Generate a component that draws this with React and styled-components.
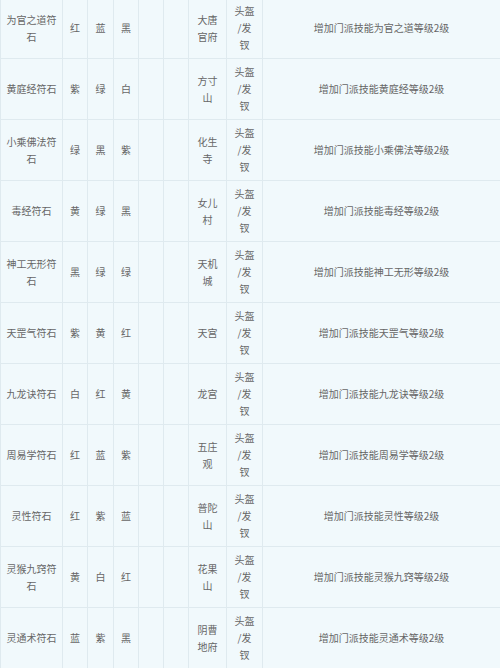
import styled, { createGlobalStyle } from "styled-components";

const GlobalStyle = createGlobalStyle`
  body {
    margin: 0;
    background: #f1f9fc;
    font-family: "Noto Sans CJK SC", "Noto Sans", sans-serif;
  }
`;

const stones = [
  ["为官之道符石", "红", "蓝", "黑", "大唐官府", "为官之道"],
  ["黄庭经符石", "紫", "绿", "白", "方寸山", "黄庭经"],
  ["小乘佛法符石", "绿", "黑", "紫", "化生寺", "小乘佛法"],
  ["毒经符石", "黄", "绿", "黑", "女儿村", "毒经"],
  ["神工无形符石", "黑", "绿", "绿", "天机城", "神工无形"],
  ["天罡气符石", "紫", "黄", "红", "天宫", "天罡气"],
  ["九龙诀符石", "白", "红", "黄", "龙宫", "九龙诀"],
  ["周易学符石", "红", "蓝", "紫", "五庄观", "周易学"],
  ["灵性符石", "红", "紫", "蓝", "普陀山", "灵性"],
  ["灵猴九窍符石", "黄", "白", "红", "花果山", "灵猴九窍"],
  ["灵通术符石", "蓝", "紫", "黑", "阴曹地府", "灵通术"],
];

const widths = [62, 25, 26, 25, 25, 25, 38, 36, 238];

export default function App() {
  return (
    <>
      <GlobalStyle />
      <Table>
        <colgroup>
          {widths.map((w, i) => (
            <col key={i} style={{ width: w }} />
          ))}
        </colgroup>
        <tbody>
          {stones.map(([name, a, b, c, school, skill]) => (
            <tr key={name}>
              <Cell $pad={5}>{name}</Cell>
              <Cell>{a}</Cell>
              <Cell>{b}</Cell>
              <Cell>{c}</Cell>
              <Cell />
              <Cell />
              <Cell $pad={4}>{school}</Cell>
              <Cell>
                头盔
                <br />
                /发
                <br />钗
              </Cell>
              <Cell>增加门派技能{skill}等级2级</Cell>
            </tr>
          ))}
        </tbody>
      </Table>
    </>
  );
}

const Table = styled.table`
  width: 500px;
  margin-top: -3px;
  table-layout: fixed;
  border-collapse: collapse;
  background: #f1f9fc;
  color: #666;
  font-size: 10px;
  line-height: 17px;
`;

const Cell = styled.td`
  border: 1px solid #dfeaef;
  padding: 4px ${(p) => p.$pad || 0}px 5px;
  text-align: center;
  vertical-align: middle;
  word-break: break-all;
`;
